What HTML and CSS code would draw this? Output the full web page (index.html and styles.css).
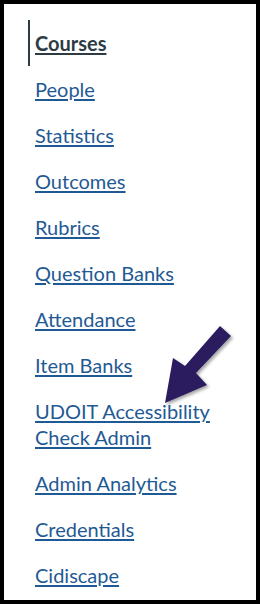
FILE: index.html
```html
<!DOCTYPE html>
<html lang="en">

<head>
    <meta charset="UTF-8">
    <meta name="viewport" content="width=device-width, initial-scale=1.0">
    <title>Admin Navigation</title>
    <link rel="stylesheet" href="styles.css">
</head>

<body>
    <div class="panel">
        <ul class="nav">
            <li class="active"><a href="#">Courses</a></li>
            <li><a href="#">People</a></li>
            <li><a href="#">Statistics</a></li>
            <li><a href="#">Outcomes</a></li>
            <li><a href="#">Rubrics</a></li>
            <li><a href="#">Question Banks</a></li>
            <li><a href="#">Attendance</a></li>
            <li><a href="#">Item Banks</a></li>
            <li><a href="#">UDOIT Accessibility Check Admin</a></li>
            <li><a href="#">Admin Analytics</a></li>
            <li><a href="#">Credentials</a></li>
            <li><a href="#">Cidiscape</a></li>
        </ul>

        <svg class="arrow" width="90" height="92" viewBox="0 0 90 92">
            <defs>
                <filter id="shadow" x="-20%" y="-20%" width="150%" height="150%">
                    <feDropShadow dx="2" dy="2" stdDeviation="1.5" flood-color="#000" flood-opacity="0.35" />
                </filter>
            </defs>
            <polygon filter="url(#shadow)" fill="#2a1f5e"
                points="62,2 73,12 38,49 49,61 7,79 15,34 27,42" />
        </svg>
    </div>
</body>

</html>
```

FILE: styles.css
```css
* {
    box-sizing: border-box;
}

body {
    margin: 0;
    padding: 0;
    background-color: #000000;
    height: 604px;
    overflow: hidden;
}

.panel {
    margin: 4px;
    height: 596px;
    background-color: #fff;
    position: relative;
}

.nav {
    list-style: none;
    margin: 0;
    padding: 16px 0 0 24px;
    font-family: Lato, "Open Sans", sans-serif;
    font-size: 20px;
    line-height: 26px;
}

.nav li {
    padding: 10px 0 10px 5px;
    border-left: 2px solid transparent;
}

.nav a {
    color: #1f5a94;
    text-decoration: underline;
    text-underline-offset: 2px;
}

.nav .active {
    border-left-color: #2d3b45;
}

.nav .active a {
    color: #2d3b45;
    font-weight: bold;
}

/* the pointer to the UDOIT link */
.arrow {
    position: absolute;
    left: 154px;
    top: 320px;
}
```
